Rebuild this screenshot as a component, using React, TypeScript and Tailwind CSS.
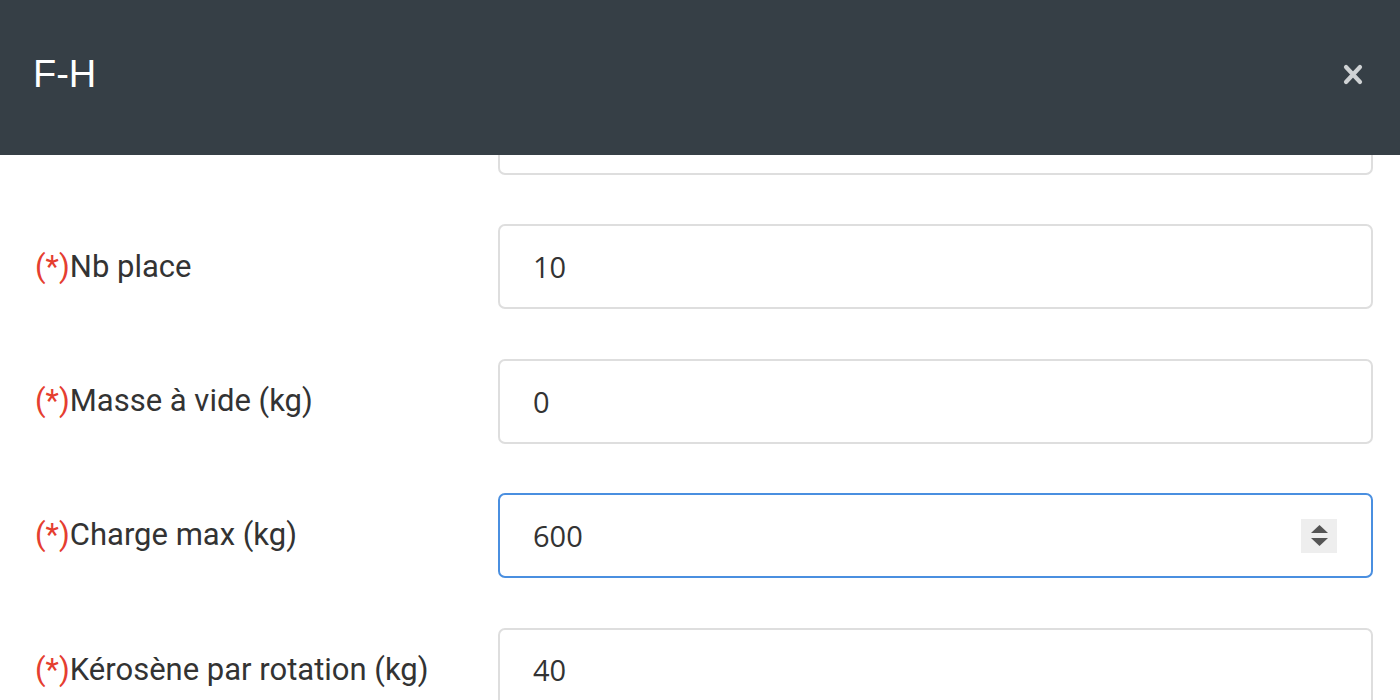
import React from "react";

const fields = [
  { label: "", value: "", partial: true },
  { label: "Nb place", value: "10" },
  { label: "Masse à vide (kg)", value: "0" },
  { label: "Charge max (kg)", value: "600", focused: true },
  { label: "Kérosène par rotation (kg)", value: "40" },
];

function Spinner() {
  return (
    <div className="flex h-[34px] w-[36px] flex-col items-center justify-center gap-[5px] bg-[#eeeeee]">
      <svg width="17" height="8" viewBox="0 0 17 8">
        <path d="M8.5 0 L17 8 L0 8 Z" fill="#555" />
      </svg>
      <svg width="17" height="8" viewBox="0 0 17 8">
        <path d="M0 0 L17 0 L8.5 8 Z" fill="#555" />
      </svg>
    </div>
  );
}

export default function App() {
  return (
    <div className="flex h-[700px] w-[1400px] flex-col overflow-hidden bg-white">
      {/* header */}
      <div className="flex h-[155px] shrink-0 items-center justify-between bg-[#363f46] pl-[33px] pr-[36px]">
        <h1 className="mb-[7px] font-['Liberation_Sans',Arial,sans-serif] text-[38px] leading-none text-white">
          F-H
        </h1>
        <button className="mb-[7px] flex h-[22px] w-[22px] items-center justify-center">
          <svg width="20" height="21" viewBox="0 0 20 21">
            <path
              d="M3 3 L17 18 M17 3 L3 18"
              stroke="#cfd2d4"
              strokeWidth="4.2"
              strokeLinecap="round"
            />
          </svg>
        </button>
      </div>

      {/* body */}
      <div className="flex flex-1 flex-col gap-[49.4px] overflow-hidden">
        {fields.map((f, i) => (
          <div
            key={i}
            className={`flex shrink-0 items-center ${f.partial ? "-mt-[65px]" : ""}`}
          >
            <label className="w-[498px] shrink-0 pl-[35px] font-['Roboto',sans-serif] text-[31px] text-[#333]">
              {f.label && (
                <>
                  <span className="text-[#e53e30]">(*)</span>
                  {f.label}
                </>
              )}
            </label>
            <div
              className={`flex h-[85px] w-[875px] items-center justify-between rounded-[7px] border-2 pl-[33px] pr-[34px] font-['Open_Sans',sans-serif] text-[29px] text-[#333] ${
                f.focused ? "border-[#4a8fe0]" : "border-[#dedede]"
              }`}
            >
              <span>{f.value}</span>
              {f.focused && <Spinner />}
            </div>
          </div>
        ))}
      </div>
    </div>
  );
}
